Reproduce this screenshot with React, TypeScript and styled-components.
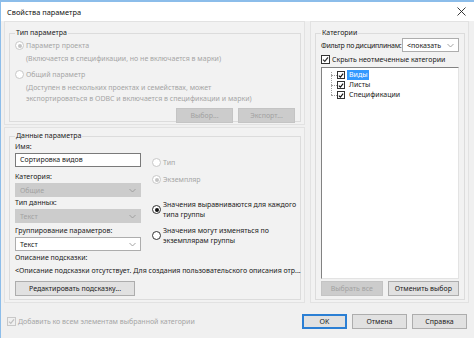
import React from 'react';
import styled, { createGlobalStyle } from 'styled-components';

const GlobalStyle = createGlobalStyle`
  html, body {
    margin: 0;
    padding: 0;
    background: #f0f0f0;
  }
  body {
    font-family: "Noto Sans", "Open Sans", sans-serif;
    font-size: 7px;
    color: #1a1a1a;
  }
  * { box-sizing: border-box; }
`;

const Window = styled.div`
  width: 474px;
  height: 338px;
  display: flex;
  flex-direction: column;
  background: #f0f0f0;
  border-left: 1px solid #8cbdea;
  overflow: hidden;
  white-space: nowrap;
`;

const TitleBar = styled.div`
  height: 21px;
  flex: none;
  display: flex;
  align-items: center;
  justify-content: space-between;
  padding: 0 8px 0 6px;
  background: #ffffff;
  border-top: 2px solid #8cbdea;
`;

const Title = styled.span`
  font-size: 7.4px;
  color: #111;
`;

const Body = styled.div`
  display: grid;
  grid-template-columns: 301px 159px;
  column-gap: 5px;
  padding: 0 0 0 3px;
  height: 283px;
`;

const Column = styled.div`
  display: flex;
  flex-direction: column;
  gap: 2px;
`;

const Panel = styled.div<{ $h: number; $pt?: number }>`
  height: ${(p) => p.$h}px;
  border: 1px solid #e2e2e2;
  background: #f2f2f2;
  padding: ${(p) => p.$pt ?? 6}px 3px 2px 4px;
  display: flex;
`;

const Fieldset = styled.fieldset`
  flex: 1;
  margin: 0;
  border: 1px solid #dcdcdc;
  border-radius: 0;
  padding: 0 5px 3px 5px;
  display: flex;
  flex-direction: column;
  min-width: 0;
`;

const Legend = styled.legend`
  padding: 0 1px;
  margin-left: 0;
  line-height: 10px;
  color: #1a1a1a;
`;

const Text = styled.div<{ $muted?: boolean; $indent?: number; $mt?: number }>`
  line-height: 11px;
  color: ${(p) => (p.$muted ? '#a5a5a5' : '#1a1a1a')};
  padding-left: ${(p) => p.$indent ?? 0}px;
  margin-top: ${(p) => p.$mt ?? 0}px;
`;

const OptionRow = styled.div<{ $muted?: boolean; $mt?: number }>`
  display: flex;
  align-items: center;
  gap: 2px;
  line-height: 11px;
  margin-top: ${(p) => p.$mt ?? 0}px;
  color: ${(p) => (p.$muted ? '#a5a5a5' : '#1a1a1a')};
`;

const Radio = styled.span<{ $checked?: boolean; $muted?: boolean }>`
  width: 9px;
  height: 9px;
  flex: none;
  border-radius: 50%;
  border: 1px solid ${(p) => (p.$muted ? '#c8c8c8' : '#333')};
  background: #fff;
  display: flex;
  align-items: center;
  justify-content: center;
  &::after {
    content: '';
    display: ${(p) => (p.$checked ? 'block' : 'none')};
    width: 4px;
    height: 4px;
    border-radius: 50%;
    background: ${(p) => (p.$muted ? '#c4c4c4' : '#111')};
  }
`;

const Check = styled.span<{ $muted?: boolean; $size?: number }>`
  width: ${(p) => p.$size ?? 9}px;
  height: ${(p) => p.$size ?? 9}px;
  flex: none;
  border: 1px solid ${(p) => (p.$muted ? '#c8c8c8' : '#333')};
  background: ${(p) => (p.$muted ? '#f0f0f0' : '#fff')};
  display: flex;
  align-items: center;
  justify-content: center;
  svg { display: block; }
`;

const ButtonRow = styled.div<{ $justify?: string; $mt?: number }>`
  display: flex;
  justify-content: ${(p) => p.$justify ?? 'flex-start'};
  gap: 5px;
  margin-top: ${(p) => p.$mt ?? 0}px;
`;

const Button = styled.div<{ $w: number; $disabled?: boolean; $focus?: boolean }>`
  width: ${(p) => p.$w}px;
  height: 15px;
  display: flex;
  align-items: center;
  justify-content: center;
  background: ${(p) => (p.$disabled ? '#cccccc' : '#e1e1e1')};
  color: ${(p) => (p.$disabled ? '#a2a2a2' : '#1a1a1a')};
  border: 1px solid ${(p) => (p.$disabled ? '#c4c4c4' : p.$focus ? '#2b7fd4' : '#adadad')};
  box-shadow: ${(p) => (p.$focus ? 'inset 0 0 0 1px #2b7fd4' : 'none')};
`;

const DataGrid = styled.div`
  display: grid;
  grid-template-columns: 126px 1fr;
  column-gap: 11px;
`;

const Label = styled.div<{ $mt?: number }>`
  line-height: 10px;
  margin-top: ${(p) => p.$mt ?? 0}px;
`;

const Input = styled.div<{ $mt?: number }>`
  height: 14px;
  margin-top: ${(p) => p.$mt ?? 1}px;
  border: 1px solid #7a7a7a;
  background: #fff;
  padding: 0 4px;
  line-height: 12px;
`;

const Select = styled.div<{ $disabled?: boolean; $mt?: number; $w?: number }>`
  height: 14px;
  width: ${(p) => (p.$w ? `${p.$w}px` : 'auto')};
  margin-top: ${(p) => p.$mt ?? 1}px;
  border: 1px solid ${(p) => (p.$disabled ? '#cccccc' : '#adadad')};
  background: ${(p) => (p.$disabled ? '#cccccc' : '#ffffff')};
  color: ${(p) => (p.$disabled ? '#a2a2a2' : '#1a1a1a')};
  padding: 0 4px;
  display: flex;
  align-items: center;
  justify-content: space-between;
`;

const RightOptions = styled.div`
  display: flex;
  flex-direction: column;
  padding-top: 14px;
`;

const MultiOption = styled.div<{ $mt?: number }>`
  display: flex;
  align-items: center;
  gap: 2px;
  margin-top: ${(p) => p.$mt ?? 0}px;
  line-height: 9.5px;
`;

const FilterRow = styled.div`
  display: flex;
  align-items: center;
  justify-content: space-between;
  margin-top: 0;
`;

const FilterLabel = styled.span`
  letter-spacing: -0.25px;
`;

const TreeBox = styled.div`
  height: 215px;
  margin-top: 2px;
  border: 1px solid #828282;
  border-right-color: #e3e3e3;
  border-bottom-color: #e3e3e3;
  background: #fff;
  padding: 2px 0 0 9px;
  position: relative;
`;

const TreeLine = styled.div`
  position: absolute;
  left: 9px;
  top: 4px;
  width: 1px;
  height: 23px;
  border-left: 1px dotted #a0a0a0;
`;

const TreeRow = styled.div`
  display: flex;
  align-items: center;
  height: 10px;
`;

const Branch = styled.span`
  width: 6px;
  flex: none;
  border-top: 1px dotted #a0a0a0;
`;

const TreeLabel = styled.span<{ $selected?: boolean }>`
  margin-left: 2px;
  padding: 0 2px;
  line-height: 10px;
  background: ${(p) => (p.$selected ? '#3399ff' : 'transparent')};
  color: ${(p) => (p.$selected ? '#fff' : '#1a1a1a')};
`;

const Footer = styled.div`
  flex: 1;
  display: flex;
  align-items: center;
  justify-content: space-between;
  padding: 0 7px 0 6px;
`;

const Chevron = () => (
  <svg width="7" height="5" viewBox="0 0 7 5">
    <path d="M0.5 1 L3.5 4 L6.5 1" fill="none" stroke="#9a9a9a" strokeWidth="0.9" />
  </svg>
);

const Tick = ({ color = '#111' }: { color?: string }) => (
  <svg width="7" height="7" viewBox="0 0 7 7">
    <path d="M1 3.6 L2.8 5.4 L6 1.4" fill="none" stroke={color} strokeWidth="1.3" />
  </svg>
);

const treeItems = ['Виды', 'Листы', 'Спецификации'];

const App: React.FC = () => {
  return (
    <>
      <GlobalStyle />
      <Window>
        <TitleBar>
          <Title>Свойства параметра</Title>
          <svg width="9" height="9" viewBox="0 0 9 9">
            <path d="M0.5 0.5 L8.5 8.5 M8.5 0.5 L0.5 8.5" stroke="#222" strokeWidth="0.9" />
          </svg>
        </TitleBar>

        <Body>
          <Column>
            <Panel $h={104}>
              <Fieldset>
                <Legend>Тип параметра</Legend>
                <OptionRow $muted $mt={2}>
                  <Radio $checked $muted />
                  Параметр проекта
                </OptionRow>
                <Text $muted $indent={11} $mt={2}>
                  (Включается в спецификации, но не включается в марки)
                </Text>
                <OptionRow $muted $mt={5}>
                  <Radio $muted />
                  Общий параметр
                </OptionRow>
                <Text $muted $indent={11} $mt={2}>
                  (Доступен в нескольких проектах и семействах, может
                </Text>
                <Text $muted $indent={11}>
                  экспортироваться в ODBC и включается в спецификации и марки)
                </Text>
                <ButtonRow $justify="flex-end" $mt={4}>
                  <Button $w={57} $disabled>Выбор...</Button>
                  <Button $w={57} $disabled>Экспорт...</Button>
                </ButtonRow>
              </Fieldset>
            </Panel>

            <Panel $h={176} $pt={3}>
              <Fieldset>
                <Legend>Данные параметра</Legend>
                <DataGrid>
                  <div>
                    <Label $mt={1}>Имя:</Label>
                    <Input>Сортировка видов</Input>
                    <Label $mt={5}>Категория:</Label>
                    <Select $disabled>
                      Общие
                      <Chevron />
                    </Select>
                    <Label $mt={1}>Тип данных:</Label>
                    <Select $disabled>
                      Текст
                      <Chevron />
                    </Select>
                    <Label $mt={3}>Группирование параметров:</Label>
                    <Select>
                      Текст
                      <Chevron />
                    </Select>
                  </div>
                  <RightOptions>
                    <OptionRow $muted $mt={2}>
                      <Radio $muted />
                      Тип
                    </OptionRow>
                    <OptionRow $muted $mt={6}>
                      <Radio $muted $checked />
                      Экземпляр
                    </OptionRow>
                    <MultiOption $mt={15}>
                      <Radio $checked />
                      <span>
                        Значения выравниваются для каждого
                        <br />
                        типа группы
                      </span>
                    </MultiOption>
                    <MultiOption $mt={7}>
                      <Radio />
                      <span>
                        Значения могут изменяться по
                        <br />
                        экземплярам группы
                      </span>
                    </MultiOption>
                  </RightOptions>
                </DataGrid>
                <Label $mt={2}>Описание подсказки:</Label>
                <Text $mt={2}>
                  &lt;Описание подсказки отсутствует. Для создания пользовательского описания отр...
                </Text>
                <ButtonRow $mt={5}>
                  <Button $w={120}>Редактировать подсказку...</Button>
                </ButtonRow>
              </Fieldset>
            </Panel>
          </Column>

          <Panel $h={282}>
            <Fieldset>
              <Legend>Категории</Legend>
              <FilterRow>
                <FilterLabel>Фильтр по дисциплинам:</FilterLabel>
                <Select $mt={0} $w={57}>
                  &lt;показать
                  <Chevron />
                </Select>
              </FilterRow>
              <OptionRow $mt={2}>
                <Check>
                  <Tick color="#333" />
                </Check>
                Скрыть неотмеченные категории
              </OptionRow>
              <TreeBox>
                <TreeLine />
                {treeItems.map((item, i) => (
                  <TreeRow key={item}>
                    <Branch />
                    <Check $size={8}>
                      <Tick />
                    </Check>
                    <TreeLabel $selected={i === 0}>{item}</TreeLabel>
                  </TreeRow>
                ))}
              </TreeBox>
              <ButtonRow $mt={2}>
                <Button $w={63} $disabled>Выбрать все</Button>
                <Button $w={73}>Отменить выбор</Button>
              </ButtonRow>
            </Fieldset>
          </Panel>
        </Body>

        <Footer>
          <OptionRow $muted>
            <Check $muted>
              <Tick color="#c0c0c0" />
            </Check>
            Добавить ко всем элементам выбранной категории
          </OptionRow>
          <ButtonRow $justify="flex-end">
            <Button $w={45} $focus>OK</Button>
            <Button $w={55}>Отмена</Button>
            <Button $w={55}>Справка</Button>
          </ButtonRow>
        </Footer>
      </Window>
    </>
  );
};

export default App;
